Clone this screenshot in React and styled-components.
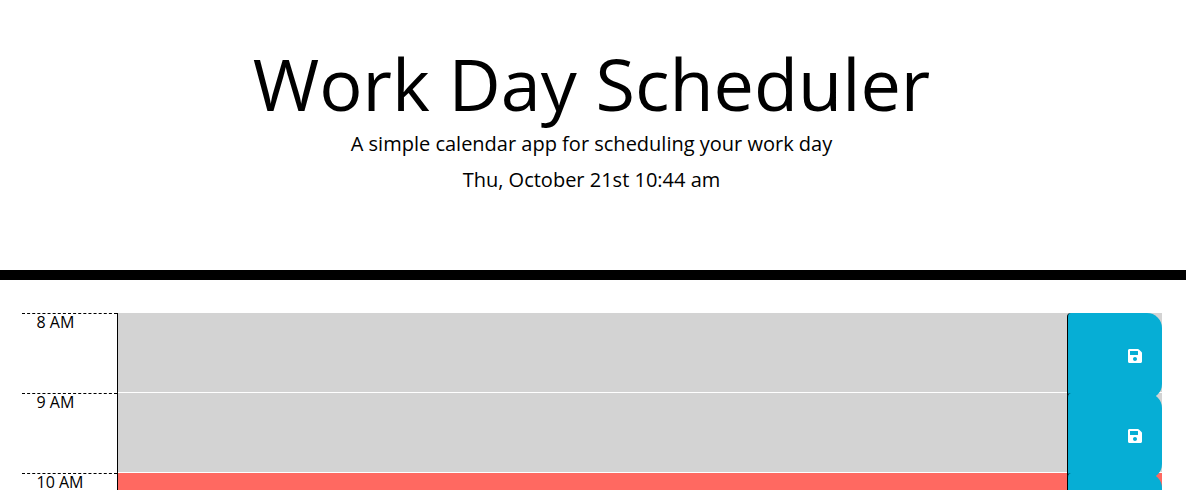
import React from "react";
import styled, { createGlobalStyle } from "styled-components";
import { FaSave } from "react-icons/fa";

const GlobalStyle = createGlobalStyle`
  *, *::before, *::after {
    box-sizing: border-box;
  }

  body {
    margin: 0;
    background: #ffffff;
    color: #000000;
    font-family: "Open Sans", "Liberation Sans", sans-serif;
    font-size: 16px;
    line-height: 16px;
  }
`;

const Header = styled.header`
  padding: 47px 3px 80px 0;
  border-bottom: 10px solid #000000;
  text-align: center;
`;

const Title = styled.h1`
  margin: 0 0 15px;
  font-size: 72px;
  font-weight: 400;
  line-height: 72px;
`;

const Lead = styled.p`
  margin: 0;
  font-size: 20px;
  line-height: 20px;

  & + & {
    margin-top: 16px;
  }
`;

const Schedule = styled.main`
  padding: 32px 3px 0 0;
`;

const Container = styled.div`
  max-width: 1140px;
  margin: 0 auto;
`;

const blockColors = {
  past: "#d3d3d3",
  present: "#ff6961",
  future: "#77dd77",
};

const TimeBlock = styled.form`
  display: grid;
  grid-template-columns: minmax(0, 1fr) minmax(0, 10fr) minmax(0, 1fr);
  grid-template-rows: 86px;
  height: 80px;
  border-top: 1px solid #ffffff;
  background: ${({ $period }) => blockColors[$period]};
`;

const Hour = styled.label`
  position: relative;
  padding: 0 15px;
  border-top: 1px dashed #000000;
  background: #ffffff;
`;

const Description = styled.textarea`
  position: relative;
  width: 100%;
  height: 100%;
  margin: 0;
  padding: 2px 15px;
  border: 0;
  border-left: 1px solid #000000;
  border-radius: 0;
  outline: 0;
  resize: none;
  background: transparent;
  color: #000000;
  font: inherit;
`;

const SaveButton = styled.button`
  position: relative;
  display: flex;
  align-items: center;
  justify-content: flex-end;
  padding: 0 20px 0 0;
  border: 0;
  border-left: 1px solid #000000;
  border-radius: 4px 15px 15px 4px;
  background: #06aed5;
  color: #ffffff;
  font-size: 16px;
  cursor: pointer;
`;

const SaveIcon = styled(FaSave)`
  width: 14px;
  height: 16px;
`;

const hours = [
  { id: "hour-8", label: "8 AM", period: "past" },
  { id: "hour-9", label: "9 AM", period: "past" },
  { id: "hour-10", label: "10 AM", period: "present" },
];

export default function App() {
  return (
    <>
      <GlobalStyle />
      <Header>
        <Title>Work Day Scheduler</Title>
        <Lead>A simple calendar app for scheduling your work day</Lead>
        <Lead>Thu, October 21st 10:44 am</Lead>
      </Header>
      <Schedule>
        <Container>
          {hours.map(({ id, label, period }) => (
            <TimeBlock
              key={id}
              $period={period}
              onSubmit={(event) => event.preventDefault()}
            >
              <Hour htmlFor={id}>{label}</Hour>
              <Description id={id} name={id} />
              <SaveButton type="submit" aria-label="Save">
                <SaveIcon aria-hidden="true" />
              </SaveButton>
            </TimeBlock>
          ))}
        </Container>
      </Schedule>
    </>
  );
}
